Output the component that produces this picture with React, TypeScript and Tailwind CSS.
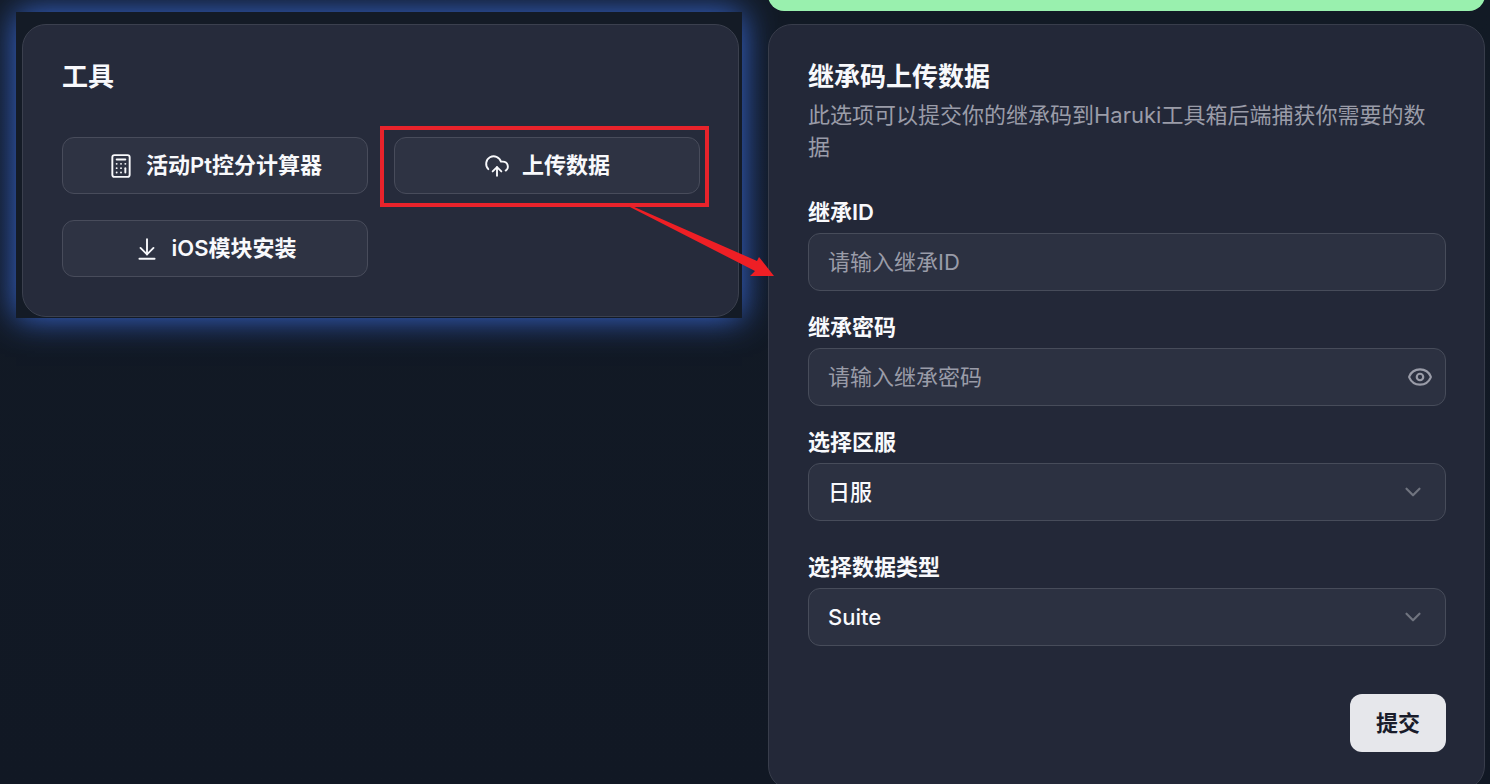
import { useState } from "react";
import type { ReactNode } from "react";
import { ArrowDownToLine, Calculator, ChevronDown, CloudUpload, Eye, EyeOff } from "lucide-react";

const controlClass =
  "w-full h-[58px] rounded-xl border border-[#474c5a] bg-[#2c3141] px-[19px] text-[22px] text-[#f8f9fc] outline-none placeholder:text-[#9a9ca8] placeholder:opacity-100";

function ToolButton({ icon, label }: { icon: ReactNode; label: string }) {
  return (
    <button
      type="button"
      className="w-full h-[57px] flex items-center justify-center gap-3 rounded-xl border border-[#484c5b] bg-[#2e3343] text-[22px] font-semibold text-[#f8f9fc]"
    >
      {icon}
      {label}
    </button>
  );
}

function Field({ id, label, children }: { id: string; label: string; children: ReactNode }) {
  return (
    <div className="flex flex-col gap-[10px]">
      <label htmlFor={id} className="text-[22px] leading-[22px] font-semibold text-[#f8f9fc]">
        {label}
      </label>
      <div className="relative">{children}</div>
    </div>
  );
}

function SelectBox({ id, options }: { id: string; options: string[] }) {
  const [value, setValue] = useState(options[0]);

  return (
    <>
      <select
        id={id}
        value={value}
        onChange={(e) => setValue(e.target.value)}
        className={`${controlClass} appearance-none font-medium`}
      >
        {options.map((o) => (
          <option key={o} value={o}>
            {o}
          </option>
        ))}
      </select>
      <ChevronDown
        size={26}
        className="absolute right-5 top-4 text-[#70747f] pointer-events-none"
      />
    </>
  );
}

function ToolsCard() {
  return (
    <section className="self-start mt-3 pt-3 pl-[6px] pr-[3px] pb-px bg-[#141b26] shadow-[0_0_32px_#3a6bdc]">
      <div className="rounded-3xl border border-[#3b404e] bg-[#262b3b] pl-[39px] pr-[38px] py-[39px]">
        <h2 className="text-[26px] leading-[26px] font-semibold text-[#f8f9fc]">工具</h2>
        <div className="mt-[47px] grid grid-cols-2 gap-[26px]">
          <ToolButton icon={<Calculator size={26} strokeWidth={1.75} />} label="活动Pt控分计算器" />
          <div className="relative">
            <ToolButton icon={<CloudUpload size={26} strokeWidth={1.75} />} label="上传数据" />
            {/* Highlight around the upload entry, with an arrow to its form */}
            <div className="absolute -top-[11px] -bottom-[13px] -left-[14px] -right-[9px] border-4 border-[#e8232b] pointer-events-none" />
            <svg
              viewBox="0 0 146 70"
              className="absolute top-[69px] -right-[74px] z-10 w-[146px] h-[70px] pointer-events-none"
              fill="#ee1f25"
            >
              <path d="M0 0H4L129 55L131 51L146 70H122L127 65Z" />
            </svg>
          </div>
          <ToolButton icon={<ArrowDownToLine size={26} strokeWidth={1.75} />} label="iOS模块安装" />
        </div>
      </div>
    </section>
  );
}

function UploadCard() {
  const [showPassword, setShowPassword] = useState(false);

  return (
    <form
      onSubmit={(e) => e.preventDefault()}
      className="rounded-3xl border border-[#383d4b] bg-[#232838] pl-[39px] pr-[38px] pt-[39px] pb-[37px]"
    >
      <h2 className="text-[26px] leading-[26px] font-semibold text-[#f8f9fc]">继承码上传数据</h2>
      <p className="mt-[9px] text-[22px] leading-8 text-[#9a9ca8]">
        此选项可以提交你的继承码到Haruki工具箱后端捕获你需要的数据
      </p>

      <div className="mt-[38px] flex flex-col gap-[25px]">
        <Field id="inherit-id" label="继承ID">
          <input id="inherit-id" type="text" placeholder="请输入继承ID" className={controlClass} />
        </Field>
        <Field id="inherit-password" label="继承密码">
          <input
            id="inherit-password"
            type={showPassword ? "text" : "password"}
            placeholder="请输入继承密码"
            className={controlClass}
          />
          <button
            type="button"
            aria-label="显示密码"
            onClick={() => setShowPassword(!showPassword)}
            className="absolute right-[13px] top-4 text-[#9a9ca8]"
          >
            {showPassword ? <EyeOff size={26} /> : <Eye size={26} />}
          </button>
        </Field>
        <Field id="server" label="选择区服">
          <SelectBox id="server" options={["日服"]} />
        </Field>
      </div>
      <div className="mt-[35px]">
        <Field id="data-type" label="选择数据类型">
          <SelectBox id="data-type" options={["Suite"]} />
        </Field>
      </div>

      <div className="mt-12 flex justify-end">
        <button
          type="submit"
          className="h-[58px] px-[26px] rounded-xl bg-[#e6e7eb] text-[22px] font-semibold text-[#191c2a]"
        >
          提交
        </button>
      </div>
    </form>
  );
}

export default function App() {
  return (
    <main className="h-screen overflow-hidden grid grid-cols-[726fr_717fr] items-start gap-[26px] pl-4 pr-[5px] bg-linear-to-b from-[#121a25] to-[#111824] font-[Inter,'Noto_Sans_CJK_SC',sans-serif]">
      <ToolsCard />
      <div>
        <div role="status" className="h-16 -mt-[53px] mb-[13px] rounded-2xl bg-[#99f0ae]" />
        <UploadCard />
      </div>
    </main>
  );
}
